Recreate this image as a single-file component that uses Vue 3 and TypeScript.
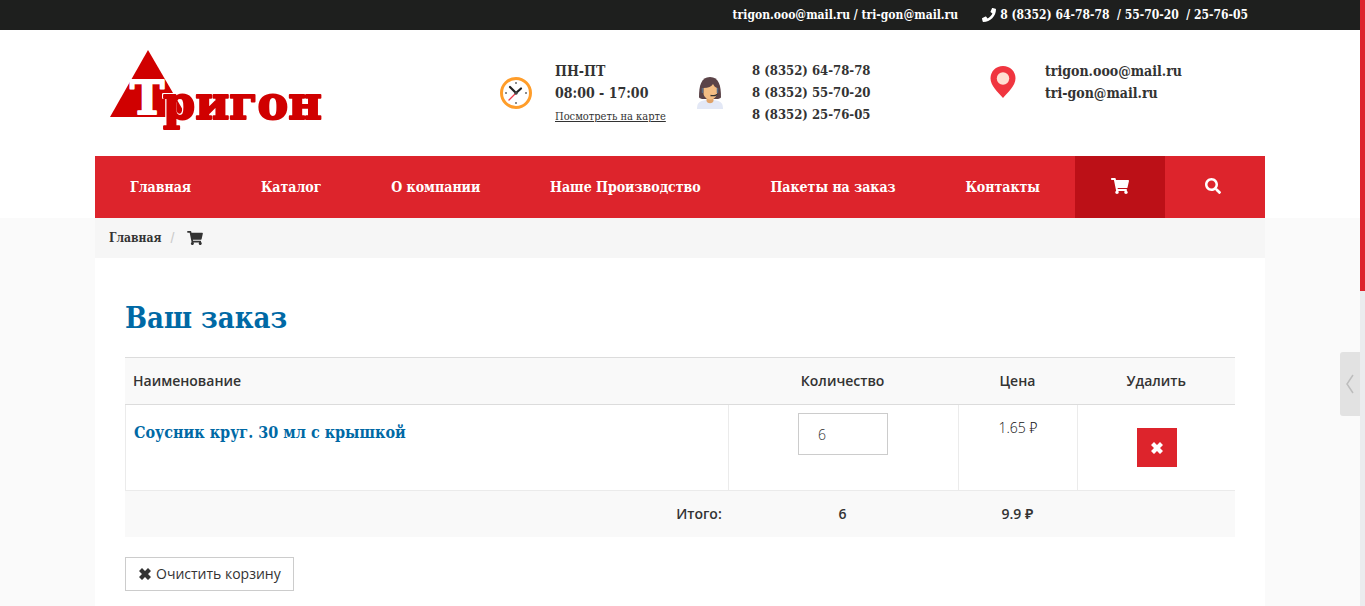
<script setup lang="ts">
import { ref } from 'vue'

interface CartItem {
  id: number
  title: string
  quantity: number
  price: string
}

const menu: string[] = ['Главная', 'Каталог', 'О компании', 'Наше Производство', 'Пакеты на заказ', 'Контакты']
const phones: string[] = ['8 (8352) 64-78-78', '8 (8352) 55-70-20', '8 (8352) 25-76-05']
const emails: string[] = ['trigon.ooo@mail.ru', 'tri-gon@mail.ru']
const items = ref<CartItem[]>([
  { id: 1, title: 'Соусник круг. 30 мл с крышкой', quantity: 6, price: '1.65' },
])
</script>

<template>
  <div class="page">
    <div class="topbar">
      <div class="container topbar-inner">
        <span><a href="#">trigon.ooo@mail.ru</a> / <a href="#">tri-gon@mail.ru</a></span>
        <span class="top-phones">
          <svg class="ico-phone" viewBox="0 0 512 512" aria-hidden="true"><path fill="currentColor" d="M493.4 24.6l-104-24c-11.300-2.600-22.900 3.300-27.500 13.900l-48 112c-4.200 9.800-1.400 21.300 6.900 28l60.600 49.600c-36 76.700-98.900 140.500-177.200 177.200l-49.600-60.600c-6.800-8.300-18.200-11.100-28-6.900l-112 48C3.900 366.500-2 378.100.6 389.400l24 104C27.100 504.200 36.700 512 48 512c256.100 0 464-207.500 464-464 0-11.200-7.700-20.900-18.600-23.400z" /></svg>
          <a href="#">8 (8352) 64-78-78</a>&nbsp; / <a href="#">55-70-20</a>&nbsp; / <a href="#">25-76-05</a>
        </span>
      </div>
    </div>

    <header class="header">
      <div class="container header-grid">
        <a href="#" class="logo" aria-label="Тригон">
          <svg viewBox="0 0 220 86" class="logo-svg">
            <polygon points="38,2 77,69 0,69" fill="#d00000" />
            <text x="20" y="66" class="logo-t">Т</text>
            <text x="53" y="71" class="logo-rest">ригон</text>
          </svg>
        </a>

        <div class="info">
          <svg class="info-icon low" viewBox="0 0 32 32" aria-hidden="true">
            <circle cx="16" cy="16" r="14.500" fill="#fff" stroke="#ff9d2a" stroke-width="3" />
            <g fill="#8d8d8d"><rect x="15" y="5" width="2" height="2" /><rect x="15" y="25" width="2" height="2" /><rect x="5" y="15" width="2" height="2" /><rect x="25" y="15" width="2" height="2" /></g>
            <path d="M16 16L9 23" stroke="#f0394a" stroke-width="1.300" stroke-linecap="round" />
            <path d="M10 10l6 6 5-4.500" fill="none" stroke="#222" stroke-width="2.200" stroke-linecap="round" />
            <circle cx="16" cy="16" r="1.800" fill="#444" />
          </svg>
          <div class="info-text">
            <div>ПН-ПТ</div>
            <div>08:00 - 17:00</div>
            <a href="#" class="map-link">Посмотреть на карте</a>
          </div>
        </div>

        <div class="info">
          <svg class="info-icon low" viewBox="0 0 32 32" aria-hidden="true">
            <path d="M2 20C2 9 4 0 13 0s11 9 11 20c0 1.500-3 2-4 2H6c-1 0-4-.5-4-2z" fill="#5b4348" />
            <path d="M0 32c0-6 2-8 9-9h8c7 1 9 3 9 9z" fill="#e3e8f6" />
            <path d="M9.500 18h7v6c-1 3-6 3-7 0z" fill="#e0a268" />
            <path d="M6.500 11c5 0 8-1.500 9.500-4 1 2 2 3 4 4v5c0 4-3.500 6.500-6.700 6.500S6.500 20 6.500 16z" fill="#f3bd84" />
            <path d="M5.500 11v5M20.500 11v5" stroke="#586b85" stroke-width="1.500" />
            <path d="M20 17c0 1.500-3 2-6.500 1.500" fill="none" stroke="#333" stroke-width="1.300" />
          </svg>
          <div class="info-text compact">
            <div v-for="phone in phones" :key="phone">{{ phone }}</div>
          </div>
        </div>

        <div class="info">
          <svg class="info-icon" viewBox="0 0 32 32" aria-hidden="true">
            <path d="M13 0C6 0 .5 5.300.5 12.200.5 20 8 26 13 32c5-6 12.500-12 12.500-19.800C25.500 5.300 20 0 13 0z" fill="#f0353f" />
            <circle cx="13" cy="12.500" r="6.200" fill="#ffdfd3" />
          </svg>
          <div class="info-text">
            <div v-for="email in emails" :key="email">{{ email }}</div>
          </div>
        </div>
      </div>
    </header>

    <div class="container nav-wrap">
      <nav class="nav">
        <div class="nav-links">
          <a v-for="entry in menu" :key="entry" href="#">{{ entry }}</a>
        </div>
        <a href="#" class="nav-cart" aria-label="Корзина">
          <svg class="ico-cart" viewBox="0 0 576 512"><path fill="currentColor" d="M528.120 301.319l47.273-208C578.806 78.301 567.391 64 551.990 64H159.208l-9.166-44.810C147.758 8.021 137.930 0 126.529 0H24C10.745 0 0 10.745 0 24v16c0 13.255 10.745 24 24 24h69.883l70.248 343.435C147.325 417.100 136 435.222 136 456c0 30.928 25.072 56 56 56s56-25.072 56-56c0-15.674-6.447-29.835-16.824-40h209.647C430.447 426.165 424 440.326 424 456c0 30.928 25.072 56 56 56s56-25.072 56-56c0-22.172-12.888-41.332-31.579-50.405l5.517-24.276c3.413-15.018-8.002-29.319-23.403-29.319H218.117l-6.545-32h293.145c11.206 0 20.920-7.754 23.403-18.681z" /></svg>
        </a>
        <button type="button" class="nav-search" aria-label="Поиск">
          <svg class="ico-search" viewBox="0 0 512 512"><path fill="currentColor" d="M505 442.700L405.300 343c-4.500-4.500-10.600-7-17-7H372c27.600-35.300 44-79.700 44-128C416 93.100 322.900 0 208 0S0 93.100 0 208s93.100 208 208 208c48.300 0 92.700-16.400 128-44v16.300c0 6.400 2.500 12.500 7 17l99.700 99.700c9.400 9.400 24.600 9.400 33.900 0l28.300-28.300c9.400-9.400 9.400-24.600.1-34zM208 336c-70.700 0-128-57.200-128-128 0-70.700 57.200-128 128-128 70.700 0 128 57.200 128 128 0 70.700-57.200 128-128 128z" /></svg>
        </button>
      </nav>
    </div>

    <div class="lower">
      <div class="container">
        <div class="crumbs">
          <a href="#">Главная</a>
          <span class="slash">/</span>
          <svg class="ico-crumb" viewBox="0 0 576 512" aria-hidden="true"><path fill="currentColor" d="M528.120 301.319l47.273-208C578.806 78.301 567.391 64 551.990 64H159.208l-9.166-44.810C147.758 8.021 137.930 0 126.529 0H24C10.745 0 0 10.745 0 24v16c0 13.255 10.745 24 24 24h69.883l70.248 343.435C147.325 417.100 136 435.222 136 456c0 30.928 25.072 56 56 56s56-25.072 56-56c0-15.674-6.447-29.835-16.824-40h209.647C430.447 426.165 424 440.326 424 456c0 30.928 25.072 56 56 56s56-25.072 56-56c0-22.172-12.888-41.332-31.579-50.405l5.517-24.276c3.413-15.018-8.002-29.319-23.403-29.319H218.117l-6.545-32h293.145c11.206 0 20.920-7.754 23.403-18.681z" /></svg>
        </div>
        <main class="content">
          <h1>Ваш заказ</h1>
          <table class="cart">
            <colgroup>
              <col class="c-name" />
              <col class="c-qty" />
              <col class="c-price" />
              <col class="c-del" />
            </colgroup>
            <thead>
              <tr>
                <th scope="col" class="left">Наименование</th>
                <th scope="col">Количество</th>
                <th scope="col">Цена</th>
                <th scope="col">Удалить</th>
              </tr>
            </thead>
            <tbody>
              <tr v-for="item in items" :key="item.id">
                <td class="left"><a href="#" class="product">{{ item.title }}</a></td>
                <td class="qty-cell"><input v-model="item.quantity" class="qty" type="text" aria-label="Количество" /></td>
                <td class="price">{{ item.price }} ₽</td>
                <td class="del-cell">
                  <button type="button" class="del" aria-label="Удалить">
                    <svg class="ico-x" viewBox="0 0 12 12"><path fill="currentColor" d="M3 0L6 3 9 0l3 3-3 3 3 3-3 3-3-3-3 3-3-3 3-3-3-3z" /></svg>
                  </button>
                </td>
              </tr>
            </tbody>
            <tfoot>
              <tr>
                <td class="right">Итого:</td>
                <td>6</td>
                <td>9.9 ₽</td>
                <td></td>
              </tr>
            </tfoot>
          </table>
          <button type="button" class="clear">
            <svg class="ico-x" viewBox="0 0 12 12" aria-hidden="true"><path fill="currentColor" d="M3 0L6 3 9 0l3 3-3 3 3 3-3 3-3-3-3 3-3-3 3-3-3-3z" /></svg>
            Очистить корзину
          </button>
        </main>
      </div>
    </div>

    <button type="button" class="side-tab" aria-label="Открыть панель">
      <svg viewBox="0 0 8 20" class="ico-chev"><path d="M7 1L1 10l6 9" fill="none" stroke="#bdbdbd" stroke-width="1.500" /></svg>
    </button>
    <div class="scroll-track"><div class="scroll-thumb"></div></div>
  </div>
</template>

<style>
html,
body {
  margin: 0;
  background: #fafafa;
}
</style>

<style scoped>
* {
  box-sizing: border-box;
}
.page {
  display: flex;
  flex-direction: column;
  min-height: 100vh;
  padding-right: 5px;
  background: #fff;
  color: #333;
  font-family: "Open Sans", "Noto Sans", sans-serif;
  font-size: 14px;
  line-height: 20px;
}
a {
  color: inherit;
  text-decoration: none;
}
svg {
  display: block;
}
button {
  font: inherit;
  color: inherit;
  border: 0;
  padding: 0;
  cursor: pointer;
}
.container {
  width: 100%;
  max-width: 1170px;
  margin: 0 auto;
}
.topbar {
  background: #1e1f1e;
  color: #fff;
  font-family: "DejaVu Serif Condensed", "DejaVu Serif", serif;
  font-size: 12px;
  font-weight: 700;
  line-height: 30px;
}
.topbar-inner {
  display: flex;
  justify-content: flex-end;
  gap: 24px;
  padding-right: 17px;
  white-space: nowrap;
}
.top-phones {
  display: flex;
  align-items: center;
  white-space: pre;
}
.ico-phone {
  width: 14px;
  height: 14px;
  margin-right: 4px;
}
.header-grid {
  display: grid;
  grid-template-columns: 390fr 197fr 293fr 275fr;
  height: 126px;
  padding-left: 15px;
}
.logo {
  padding-top: 18px;
}
.logo-svg {
  width: 220px;
  height: 86px;
  overflow: visible;
}
.logo-t,
.logo-rest {
  font-family: "DejaVu Serif", serif;
  font-weight: 700;
  font-size: 46px;
  stroke-linejoin: round;
  stroke-width: 2px;
}
.logo-t {
  fill: #fff;
  stroke: #fff;
}
.logo-rest {
  fill: #d00000;
  stroke: #d00000;
  filter: drop-shadow(-1px 0 0 #fff) drop-shadow(0 -1px 0 #fff);
}
.info {
  display: flex;
  gap: 23px;
  padding-top: 30px;
  white-space: nowrap;
  font-family: "DejaVu Serif Condensed", "DejaVu Serif", serif;
  font-size: 14px;
  font-weight: 700;
  line-height: 22px;
}
.info-text.compact {
  font-size: 13px;
}
.info-icon {
  flex: none;
  width: 32px;
  height: 32px;
  margin-top: 6px;
}
.info-icon.low {
  margin-top: 17px;
}
.map-link {
  font-size: 11px;
  font-weight: 400;
  text-decoration: underline;
}
.nav {
  display: flex;
  height: 62px;
  background: #dd242c;
  color: #fff;
}
.nav-links {
  flex: 1;
  display: flex;
  justify-content: space-between;
  align-items: center;
  padding: 0 35px;
  white-space: nowrap;
  font-family: "DejaVu Serif Condensed", "DejaVu Serif", serif;
  font-size: 14px;
  font-weight: 700;
}
.nav-cart,
.nav-search {
  display: flex;
  align-items: center;
  justify-content: center;
  padding-bottom: 2px;
}
.nav-cart {
  width: 90px;
  background: #bc1017;
}
.nav-search {
  width: 100px;
  padding-right: 4px;
  background: #dd242c;
}
.ico-cart {
  width: 18px;
  height: 16px;
}
.ico-search {
  width: 16px;
  height: 16px;
}
.lower {
  flex: 1;
  display: flex;
  background: #fafafa;
}
.lower > .container {
  display: flex;
  flex-direction: column;
}
.crumbs {
  display: flex;
  align-items: center;
  height: 40px;
  padding-left: 14px;
  background: #f6f6f6;
  font-family: "DejaVu Serif Condensed", "DejaVu Serif", serif;
  font-size: 12px;
  font-weight: 700;
}
.slash {
  margin: 0 13px 0 9px;
  color: #ccc;
}
.ico-crumb {
  width: 16px;
  height: 14px;
}
.content {
  flex: 1;
  padding: 40px 30px 15px;
  background: #fff;
}
h1 {
  margin: 0 0 19px;
  color: #0069a5;
  font-family: "DejaVu Serif Condensed", "DejaVu Serif", serif;
  font-size: 29px;
  font-weight: 700;
  line-height: 40px;
}
.cart {
  width: 100%;
  table-layout: fixed;
  border-collapse: separate;
  border-spacing: 0;
  text-align: center;
}
.c-name {
  width: 54.3%;
}
.c-qty {
  width: 20.700%;
}
.c-price {
  width: 10.800%;
}
.c-del {
  width: 14.200%;
}
th {
  height: 48px;
  padding: 0 8px;
  border-top: 1px solid #dcdcdc;
  border-bottom: 1px solid #dcdcdc;
  background: #f9f9f9;
  font-weight: 600;
}
tbody td {
  height: 86px;
  padding: 8px;
  vertical-align: top;
  border-left: 1px solid #ebebeb;
  border-bottom: 1px solid #ebebeb;
}
tfoot td {
  height: 46px;
  padding: 0 6px;
  background: #f9f9f9;
  font-weight: 600;
}
.cart .left {
  text-align: left;
}
.cart .right {
  text-align: right;
}
.product {
  display: block;
  padding-top: 10px;
  color: #0069a5;
  font-family: "DejaVu Serif Condensed", "DejaVu Serif", serif;
  font-size: 16px;
  font-weight: 700;
}
.qty {
  display: block;
  width: 90px;
  height: 42px;
  margin: 0 auto;
  padding: 0 19px;
  border: 1px solid #ccc;
  border-radius: 0;
  background: #fff;
  color: #333;
  font: inherit;
  font-weight: 300;
}
.cart .price {
  padding-top: 13px;
  font-weight: 300;
  color: #111;
}
.cart .del-cell {
  padding-top: 23px;
}
.del {
  display: flex;
  align-items: center;
  justify-content: center;
  width: 40px;
  height: 39px;
  margin: 0 auto;
  background: #dd242c;
  color: #fff;
}
.ico-x {
  width: 12px;
  height: 12px;
}
.clear {
  display: flex;
  align-items: center;
  gap: 5px;
  height: 34px;
  margin-top: 20px;
  padding: 0 12px 0 13px;
  border: 1px solid #ccc;
  background: #fff;
  white-space: nowrap;
}
.side-tab {
  position: fixed;
  top: 352px;
  right: 5px;
  display: flex;
  align-items: center;
  justify-content: center;
  width: 20px;
  height: 64px;
  border-radius: 3px 0 0 3px;
  background: #e2e2e2;
}
.ico-chev {
  width: 8px;
  height: 20px;
}
.scroll-track {
  position: fixed;
  top: 0;
  right: 0;
  bottom: 0;
  width: 5px;
  background: #ebecee;
}
.scroll-thumb {
  height: 48%;
  background: #dd242c;
}
</style>
